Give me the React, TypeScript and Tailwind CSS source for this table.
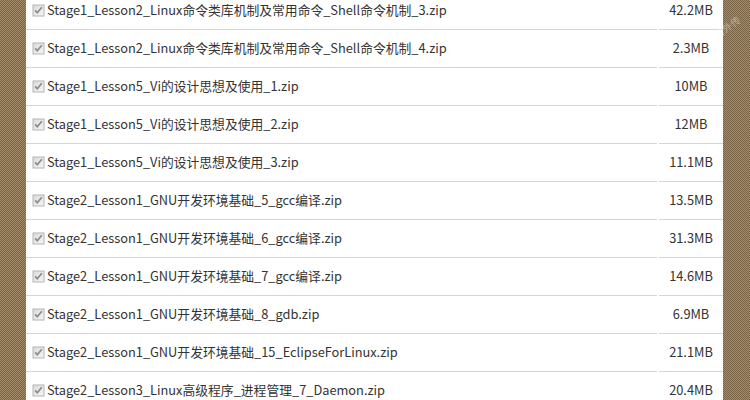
import React from "react";

const files: [string, string][] = [
  ["Stage1_Lesson2_Linux命令类库机制及常用命令_Shell命令机制_3.zip", "42.2MB"],
  ["Stage1_Lesson2_Linux命令类库机制及常用命令_Shell命令机制_4.zip", "2.3MB"],
  ["Stage1_Lesson5_Vi的设计思想及使用_1.zip", "10MB"],
  ["Stage1_Lesson5_Vi的设计思想及使用_2.zip", "12MB"],
  ["Stage1_Lesson5_Vi的设计思想及使用_3.zip", "11.1MB"],
  ["Stage2_Lesson1_GNU开发环境基础_5_gcc编译.zip", "13.5MB"],
  ["Stage2_Lesson1_GNU开发环境基础_6_gcc编译.zip", "31.3MB"],
  ["Stage2_Lesson1_GNU开发环境基础_7_gcc编译.zip", "14.6MB"],
  ["Stage2_Lesson1_GNU开发环境基础_8_gdb.zip", "6.9MB"],
  ["Stage2_Lesson1_GNU开发环境基础_15_EclipseForLinux.zip", "21.1MB"],
  ["Stage2_Lesson3_Linux高级程序_进程管理_7_Daemon.zip", "20.4MB"],
];

function CheckBox() {
  return (
    <svg width="13" height="13" viewBox="0 0 13 13" className="shrink-0">
      <defs>
        <linearGradient id="cbg" x1="0" y1="0" x2="1" y2="1">
          <stop offset="0" stopColor="#dcdcdc" />
          <stop offset="1" stopColor="#f4f4f4" />
        </linearGradient>
      </defs>
      <rect x="0.5" y="0.5" width="12" height="12" fill="#b4b4b4" />
      <rect x="1.5" y="1.5" width="10" height="10" fill="url(#cbg)" />
      <path d="M3.2 6.4 L5.3 8.8 L9.8 3.2" fill="none" stroke="#8a8a8a" strokeWidth="1.7" />
    </svg>
  );
}

export default function App() {
  const strip =
    "w-[26px] shrink-0 bg-[#8c7656] bg-[conic-gradient(#7a6546_25%,#a08a68_0_50%,#7a6546_0_75%,#a08a68_0)] bg-[length:2px_2px]";
  return (
    <div className="flex h-[400px] w-[750px] overflow-hidden bg-white font-['Microsoft_YaHei','Noto_Sans_CJK_SC',sans-serif] text-[12.8px] text-[#333]">
      <div className={strip} />
      <div className="relative flex-1 overflow-hidden">
        <div className="-mt-[8px] flex flex-col">
          {files.map(([name, size]) => (
            <div key={name} className="flex h-[38px]">
              <div className="flex flex-1 items-center gap-[2px] border-b border-[#d4d4d4] pl-[6px]">
                <CheckBox />
                <span className="leading-none">{name}</span>
              </div>
              <div className="ml-[2px] flex w-[64px] items-center justify-center border-b border-[#d4d4d4] leading-none">
                {size}
              </div>
            </div>
          ))}
        </div>
      </div>
      <div className={`${strip} relative w-[27px]`}>
        <span className="absolute left-[-20px] top-[25px] -rotate-[35deg] whitespace-nowrap text-[10px] leading-none text-white/40">
          请勿外传
        </span>
      </div>
    </div>
  );
}
